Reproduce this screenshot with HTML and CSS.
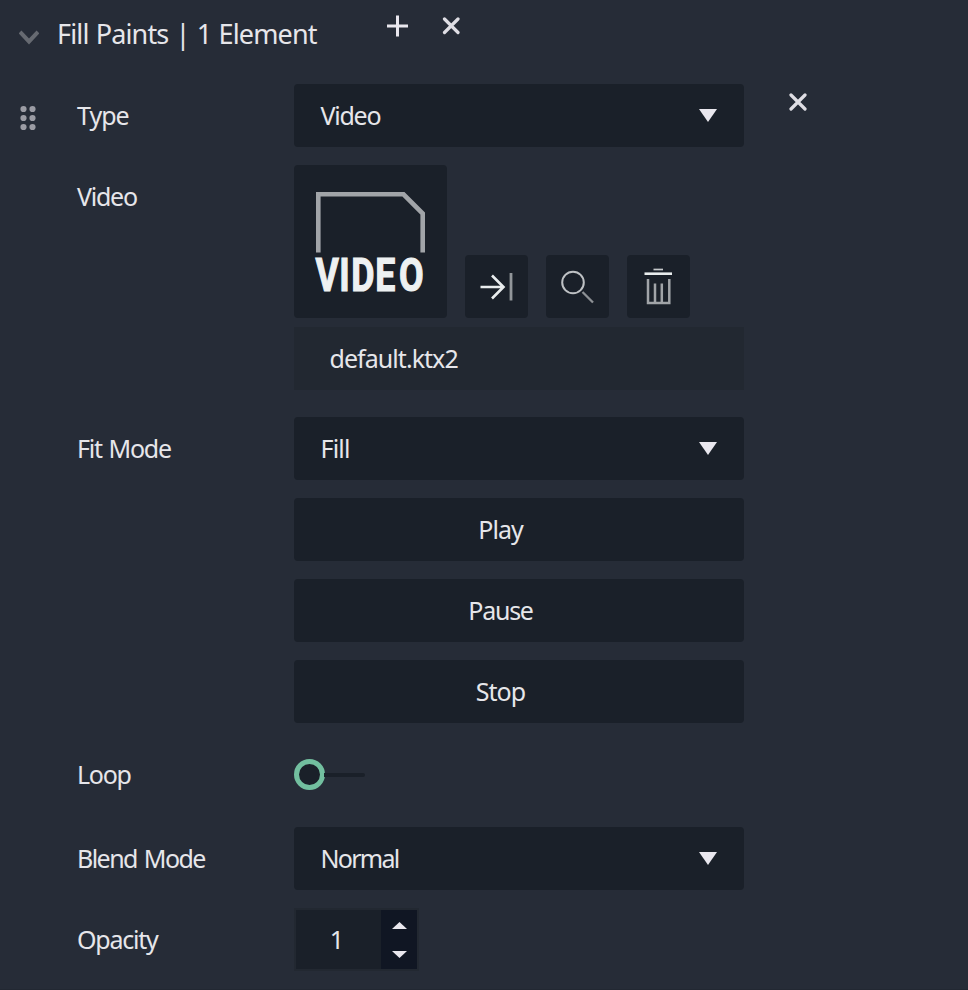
FILE: index.html
```html
<!DOCTYPE html>
<html lang="en">
<head>
<meta charset="utf-8">
<title>Fill Paints</title>
<link rel="stylesheet" href="styles.css">
</head>
<body>
<main class="panel">
  <header class="header">
    <svg class="chevron" width="20" height="16" viewBox="0 0 20 16"><path d="M1 3 L10 12.5 L19 3" fill="none" stroke="#666a71" stroke-width="4"/></svg>
    <h1 class="title"><span>Fill Paints | 1 Element</span></h1>
    <svg class="add" width="22" height="22" viewBox="0 0 22 22"><path d="M11.5 0.5V21.5M1 11H22" stroke="#e9e7ee" stroke-width="3"/></svg>
    <svg class="clear" width="18" height="18" viewBox="0 0 18 18"><path d="M2.5 2L16 15.5M16 2L2.5 15.5" stroke="#dfdee4" stroke-width="3.2" stroke-linecap="round"/></svg>
  </header>
  <section class="rows">
    <div class="row type-row">
      <svg class="handle" width="16" height="26" viewBox="0 0 16 26" fill="#9b9ca4"><circle cx="3.5" cy="4" r="3.1"/><circle cx="12.5" cy="4" r="3.1"/><circle cx="3.5" cy="13" r="3.1"/><circle cx="12.5" cy="13" r="3.1"/><circle cx="3.5" cy="22" r="3.1"/><circle cx="12.5" cy="22" r="3.1"/></svg>
      <label class="label t-type">Type</label>
      <div class="field select"><span class="t-video">Video</span><svg width="18" height="13" viewBox="0 0 18 13"><path d="M0 0H18L9 13Z" fill="#e9e7ee"/></svg></div>
      <svg class="remove" width="18" height="18" viewBox="0 0 18 18"><path d="M2 2L16 16M16 2L2 16" stroke="#dfdee4" stroke-width="3.2" stroke-linecap="round"/></svg>
    </div>
    <div class="row video-row">
      <label class="label t-video">Video</label>
      <div class="asset">
        <div class="thumb">
          <svg width="153" height="153" viewBox="0 0 153 153">
            <path d="M24.3 87.5V29.3H109.5L128.7 48.5V87.5" fill="none" stroke="#a1a4a8" stroke-width="4.6"/>
            <text class="badge" transform="scale(.76 1)" x="28.3 59.5 75.3 107 138.3" y="126">VIDEO</text>
          </svg>
        </div>
        <button class="tool" aria-label="Assign"><svg width="63" height="63" viewBox="0 0 63 63" fill="none"><path d="M15.5 32H38M27 20.5L38.5 32L27 43.5" stroke="#e9edee" stroke-width="2.6"/><path d="M46 18V45.5" stroke="#92969a" stroke-width="2.8"/></svg></button>
        <button class="tool" aria-label="Search"><svg width="63" height="63" viewBox="0 0 63 63" fill="none"><circle cx="27" cy="27.5" r="10.8" stroke="#bec1c4" stroke-width="2"/><path d="M36.5 37L47 47.5" stroke="#8d9195" stroke-width="2.3"/></svg></button>
        <button class="tool" aria-label="Delete"><svg width="63" height="63" viewBox="0 0 63 63" fill="none"><path d="M26.5 14.5H36" stroke="#c5c8ca" stroke-width="1.7"/><path d="M17.5 18.7H45" stroke="#e9edee" stroke-width="2.6"/><path d="M21 24V48H42.3V24M28 28.5V47M34.8 28.5V47" stroke="#a1a4a8" stroke-width="2.5"/></svg></button>
      </div>
    </div>
    <div class="row name-row"><div class="filename"><span class="t-file">default.ktx2</span></div></div>
    <div class="row fit-row">
      <label class="label t-fit">Fit Mode</label>
      <div class="field select"><span class="t-fill">Fill</span><svg width="18" height="13" viewBox="0 0 18 13"><path d="M0 0H18L9 13Z" fill="#e9e7ee"/></svg></div>
    </div>
    <div class="row"><button class="field action"><span class="t-play">Play</span></button></div>
    <div class="row"><button class="field action"><span class="t-pause">Pause</span></button></div>
    <div class="row"><button class="field action"><span class="t-stop">Stop</span></button></div>
    <div class="row loop-row">
      <label class="label t-loop">Loop</label>
      <div class="toggle"><span class="knob"></span><span class="track"></span></div>
    </div>
    <div class="row blend-row">
      <label class="label t-blend">Blend Mode</label>
      <div class="field select"><span class="t-normal">Normal</span><svg width="18" height="13" viewBox="0 0 18 13"><path d="M0 0H18L9 13Z" fill="#e9e7ee"/></svg></div>
    </div>
    <div class="row opacity-row">
      <label class="label t-opacity">Opacity</label>
      <div class="stepper"><span class="value">1</span><span class="arrows"><svg width="15" height="7" viewBox="0 0 15 7"><path d="M0 7L7.5 0L15 7Z" fill="#e9e7ee"/></svg><svg width="15" height="7" viewBox="0 0 15 7"><path d="M0 0H15L7.5 7Z" fill="#e9e7ee"/></svg></span></div>
    </div>
  </section>
</main>
</body>
</html>
```
FILE: styles.css
```css
* { box-sizing: border-box; }
body { margin: 0; background: #262c37; color: #e6e6ea; font: 25px/34px "Noto Sans", sans-serif; }
.panel { display: flex; flex-direction: column; height: 990px; overflow: hidden; border-bottom: 1px solid #222832; }
svg { display: block; flex: none; }
.header { display: flex; align-items: flex-start; height: 84px; padding-left: 19px; }
.chevron { margin-top: 29px; }
.title { margin: 15px 0 0 18px; width: 329px; font-size: 27px; line-height: 38px; font-weight: 400; letter-spacing: -0.85px; word-spacing: 1px; white-space: nowrap; }
.add { margin-top: 15px; }
.clear { margin: 17px 0 0 34px; }
.rows { display: flex; flex-direction: column; gap: 18px; }
.row { display: flex; height: 63px; padding-left: 294px; }
.row:has(.label) { padding-left: 77px; }
.row.type-row { padding-left: 20px; }
.handle { margin: 21px 41px 0 0; }
.label { width: 217px; padding-top: 14px; white-space: nowrap; }
.field { width: 450px; height: 63px; flex: none; border: 0; border-radius: 4px; background: #1a2029; color: inherit; font: inherit; }
.select { display: flex; align-items: center; justify-content: space-between; padding: 0 27px 1px 26.5px; }
.remove { margin: 9px 0 0 45px; }
.row.video-row { height: 153px; }
.asset { display: flex; align-items: flex-end; gap: 18px; }
.thumb { width: 153px; height: 153px; border-radius: 4px; background: #1a2029; }
.badge { font: 700 47px Roboto, sans-serif; fill: #eef1f2; stroke: #eef1f2; stroke-width: 1.2px; }
.tool { width: 63px; height: 63px; padding: 0; border: 0; border-radius: 4px; background: #1a2029; }
.name-row { margin-top: -9px; }
.filename { width: 450px; height: 63px; padding: 14px 35.5px; background: #222831; }
.fit-row { margin-top: 9px; }
.action { padding: 0 37px 2px 0; text-align: center; }
.row.loop-row { margin-top: 2px; }
.toggle { display: flex; align-items: center; height: 63px; }
.knob { width: 31px; height: 31px; border: 5px solid #72bf9f; border-radius: 50%; background: #1a2029; }
.track { width: 41px; height: 4px; margin-left: -1px; border-radius: 0 2px 2px 0; background: #1a2029; }
.row.blend-row { margin-top: 3px; }
.stepper { display: flex; width: 125px; height: 63px; border: 2px solid #222831; background: #1a2029; }
.value { width: 85px; padding: 12px 3px 0 0; text-align: center; }
.arrows { display: flex; flex: 1; flex-direction: column; align-items: center; justify-content: space-between; padding: 12px 0 11px; background: #101623; }
.t-type, .t-play, .t-stop { letter-spacing: -1px; }
.t-file { letter-spacing: -0.95px; }
.t-fill { letter-spacing: -0.8px; }
.t-fit { letter-spacing: -1.25px; word-spacing: 1.5px; }
.t-video, .t-pause, .t-loop, .t-opacity { letter-spacing: -1.25px; }
.t-blend { letter-spacing: -1.55px; word-spacing: 2px; }
.t-normal { letter-spacing: -1.7px; }
```
